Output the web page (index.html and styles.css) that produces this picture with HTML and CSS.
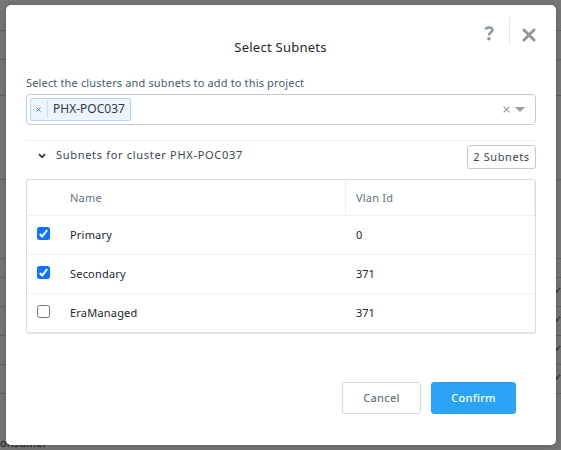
FILE: index.html
```html
<!DOCTYPE html>
<html lang="en">
<head>
<meta charset="utf-8">
<title>Select Subnets</title>
<link rel="stylesheet" href="styles.css">
</head>
<body>
<div class="backdrop">
  <div class="line h31"></div>
  <div class="line h29"></div>
  <div class="line h36"></div>
  <div class="line h84"></div>
  <div class="line h79"></div>
  <div class="line h19"></div>
  <div class="line h29"><svg class="edit" viewBox="0 0 5 6"><path d="M0 6V3.500L1.800 2 3 3.500 1.200 5.500ZM2.300 1.500 3.500.3 4.700 1.500 3.500 2.900Z"/></svg></div>
  <div class="line h29"><svg class="edit" viewBox="0 0 5 6"><path d="M0 6V3.500L1.800 2 3 3.500 1.200 5.500ZM2.300 1.500 3.500.3 4.700 1.500 3.500 2.900Z"/></svg></div>
  <div class="line h29"><svg class="edit" viewBox="0 0 5 6"><path d="M0 6V3.500L1.800 2 3 3.500 1.200 5.500ZM2.300 1.500 3.500.3 4.700 1.500 3.500 2.900Z"/></svg></div>
  <div class="line h29"><svg class="edit" viewBox="0 0 5 6"><path d="M0 6V3.500L1.800 2 3 3.500 1.200 5.500ZM2.300 1.500 3.500.3 4.700 1.500 3.500 2.900Z"/></svg></div>
  <div class="role">onsumer</div>
</div>
<section class="modal">
  <header class="header">
    <h1 class="title">Select Subnets</h1>
    <div class="tools">
      <svg class="help" viewBox="0 0 10 15"><path d="M1.300 3.200C2.400 1.700 3.600 1.400 5 1.400c2 0 3.400 1 3.400 2.700C8.400 6.600 4.900 6.500 4.900 9.400" fill="none" stroke="#8b979e" stroke-width="2.500"/><circle cx="4.900" cy="12.800" r="1.700" fill="#8b979e"/></svg>
      <span class="rule"></span>
      <svg class="close" viewBox="0 0 14 14"><path d="M2 2 12 12M12 2 2 12" fill="none" stroke="#949698" stroke-width="3" stroke-linecap="round"/></svg>
    </div>
  </header>
  <main class="content">
    <label class="label">Select the clusters and subnets to add to this project</label>
    <div class="select">
      <div class="chip">
        <span class="remove"><svg viewBox="0 0 5 5"><path d="M.5.5 4.500 4.500M4.500.5.5 4.500" fill="none" stroke="#2d8ceb" stroke-width="1"/></svg></span>
        <span class="chip-text">PHX-POC037</span>
      </div>
      <svg class="clear" viewBox="0 0 7 7"><path d="M.6.6 6.400 6.400M6.400.6.6 6.400" fill="none" stroke="#999" stroke-width="1.200"/></svg>
      <svg class="arrow" viewBox="0 0 10 5"><path d="M0 0H10L5 5Z" fill="#999"/></svg>
    </div>
    <div class="group">
      <svg class="chevron" viewBox="0 0 8 6"><path d="M1 1.200 4 4.200 7 1.200" fill="none" stroke="#323c47" stroke-width="1.700"/></svg>
      <span class="group-text">Subnets for cluster PHX-POC037</span>
      <span class="count">2 Subnets</span>
    </div>
    <div class="table">
      <div class="row head"><span></span><span class="name">Name</span><span class="vlan">Vlan Id</span></div>
      <div class="row"><span class="box on"><svg viewBox="0 0 13 13"><path d="M2.800 7 5.200 9.500 10.200 3" fill="none" stroke="#fff" stroke-width="2"/></svg></span><span class="name">Primary</span><span class="vlan">0</span></div>
      <div class="row"><span class="box on"><svg viewBox="0 0 13 13"><path d="M2.800 7 5.200 9.500 10.200 3" fill="none" stroke="#fff" stroke-width="2"/></svg></span><span class="name">Secondary</span><span class="vlan">371</span></div>
      <div class="row"><span class="box"></span><span class="name">EraManaged</span><span class="vlan">371</span></div>
    </div>
  </main>
  <footer class="footer">
    <button class="btn cancel">Cancel</button>
    <button class="btn confirm">Confirm</button>
  </footer>
</section>
</body>
</html>
```
FILE: styles.css
```css
* { box-sizing: border-box; }
body {
  margin: 0;
  width: 561px;
  height: 450px;
  overflow: hidden;
  position: relative;
  background: #777;
  font-family: "Noto Sans", "Open Sans", sans-serif;
  font-size: 11px;
  color: #22272e;
}
svg { display: block; }
.backdrop { display: flex; flex-direction: column; height: 450px; }
.line { flex: none; display: flex; justify-content: flex-end; border-bottom: 1px solid #606162; }
.h19 { height: 19px; }
.h29 { height: 29px; }
.h31 { height: 31px; }
.h36 { height: 36px; }
.h79 { height: 79px; }
.h84 { height: 84px; }
.edit { width: 5px; height: 6px; margin: 9px 0 0; fill: #3b3d3f; }
.role { padding-top: 41px; line-height: 16px; color: #282c30; font-size: 11px; font-weight: 500; }
.modal {
  position: absolute;
  left: 6px;
  top: 5px;
  width: 550px;
  height: 440px;
  border-radius: 5px;
  background: #fff;
  box-shadow: 0 1px 8px rgba(0, 0, 0, .22);
  display: flex;
  flex-direction: column;
}
.header {
  height: 70px;
  display: grid;
  grid-template-columns: 1fr auto 1fr;
  padding-right: 20px;
}
.title {
  grid-column: 2;
  margin: 32px 0 0 19px;
  font-size: 13px;
  font-weight: 400;
  line-height: 20px;
  letter-spacing: .25px;
  white-space: nowrap;
}
.tools { display: flex; justify-content: flex-end; height: 58px; }
.help { width: 10px; height: 15px; margin: 21px 15px 0 0; }
.rule { width: 1px; height: 28px; margin-top: 12px; background: #e4e6e8; }
.close { width: 14px; height: 14px; margin: 23px 0 0 12px; }
.content { padding: 0 20px; }
.label {
  display: block;
  height: 19px;
  line-height: 16px;
  letter-spacing: .15px;
  color: #4c5a69;
  white-space: nowrap;
}
.select {
  display: flex;
  align-items: center;
  height: 31px;
  border: 1px solid #c7c9cb;
  border-radius: 4px;
  padding: 0 10px 0 3px;
}
.chip {
  display: flex;
  align-items: center;
  width: 101px;
  height: 23px;
  margin-top: -1px;
  border: 1px solid #b5d8fc;
  border-radius: 2px;
  background: #ebf4ff;
}
.remove { width: 17px; height: 17px; padding: 6px 0 0 5px; border-right: 1px solid #c2e0ff; }
.remove svg { width: 5px; height: 5px; }
.chip-text { margin-left: 5px; font-size: 12px; line-height: 16px; color: #303942; white-space: nowrap; }
.clear { width: 7px; height: 7px; margin: 0 5px 0 auto; }
.arrow { width: 10px; height: 5px; }
.group {
  display: flex;
  height: 39px;
  margin-top: 15px;
  border-top: 1px solid #f0f0f0;
  color: #3c4650;
}
.chevron { width: 8px; height: 6px; margin: 12px 10px 0 12px; }
.group-text { margin-top: 6px; line-height: 16px; letter-spacing: .69px; white-space: nowrap; }
.count {
  width: 69px;
  height: 24px;
  margin: 4px 0 0 auto;
  border: 1px solid #c7c9cb;
  border-radius: 3px;
  line-height: 22px;
  text-align: center;
  letter-spacing: .6px;
  white-space: nowrap;
}
.table {
  height: 155px;
  border: 1px solid #d9dbdd;
  border-bottom-width: 2px;
  border-bottom-color: #e2e3e4;
  border-radius: 3px;
}
.row {
  display: grid;
  grid-template-columns: 43px 275px 1fr;
  height: 39px;
  border-bottom: 1px solid #f0f1f1;
  line-height: 38px;
  letter-spacing: .2px;
}
.row:last-child { border-bottom: 0; height: 38px; }
.row .vlan { padding-left: 10px; border-left: 1px solid transparent; letter-spacing: 0; }
.row.head { height: 36px; line-height: 36px; color: #627386; letter-spacing: .2px; }
.head .vlan { border-left-color: #eeeff0; border-right: 1px solid #eeeff0; letter-spacing: .2px; }
.box { width: 13px; height: 13px; margin: 11px 0 0 10px; border: 1px solid #767676; border-radius: 2.500px; }
.box.on { border: 0; background: #0d74ff; }
.footer { display: flex; justify-content: flex-end; gap: 10px; margin-top: 48px; padding-right: 40px; }
.btn {
  height: 32px;
  padding: 0;
  border: 1px solid #d2d8de;
  border-radius: 3px;
  background: #fff;
  font: 500 11px/30px "Noto Sans", sans-serif;
  letter-spacing: .3px;
}
.cancel { width: 79px; color: #69737d; }
.confirm { width: 85px; border-color: #2ca4f6; background: #2ca4f6; color: #fff; }
```
